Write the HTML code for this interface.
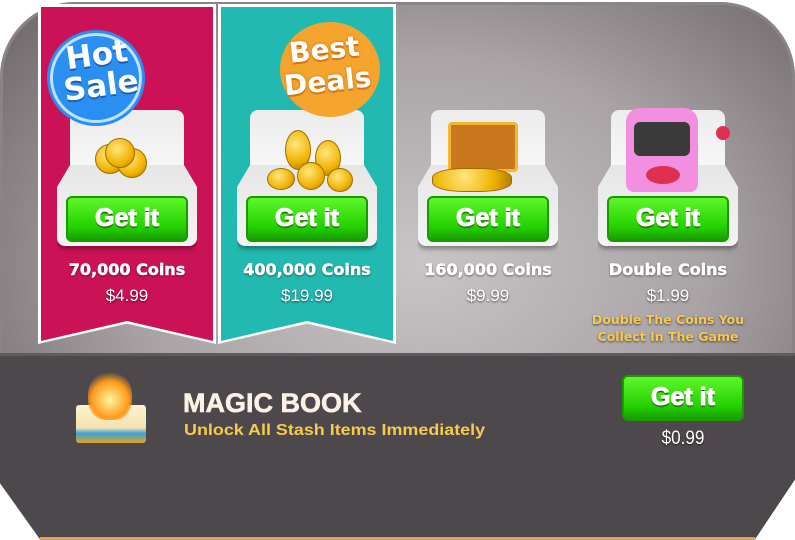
<!DOCTYPE html>
<html><head><meta charset="utf-8"><style>
*{margin:0;padding:0;box-sizing:border-box}
body{width:795px;height:540px;background:#fff;position:relative;overflow:hidden;font-family:"Liberation Sans",sans-serif}
.panel{position:absolute;left:0;top:2px;width:795px;height:400px;border-radius:75px 75px 0 0;background:radial-gradient(ellipse 520px 380px at 420px 260px,#c9c5c7 0%,#a9a3a6 55%,#716b6e 100%);box-shadow:inset 0 0 0 3px #8a8487}
.dark{position:absolute;left:0;top:353px;width:795px;height:186px;background:#4c484b;clip-path:polygon(0 0,100% 0,100% 68%,95% 100%,5% 100%,0 70%);border-top:3px solid #5f5a5d}
.orange{position:absolute;left:40px;top:537px;width:715px;height:3px;background:#e2a05a}
.rib{position:absolute;top:4px;width:178px;height:340px;clip-path:polygon(0 0,100% 0,100% 100%,50% 94%,0 100%)}
.rib .in{position:absolute;left:3px;top:3px;right:3px;bottom:3px;clip-path:polygon(0 0,100% 0,100% 100%,50% 94%,0 100%)}
.card{position:absolute;top:110px;width:140px;height:136px}
.card .top{position:absolute;left:13px;right:13px;top:0;height:60px;border-radius:8px 8px 0 0;background:linear-gradient(#ececec,#f8f8f8)}
.card .bot{position:absolute;left:0;right:0;top:55px;bottom:0;border-radius:8px;background:linear-gradient(#e6e6e6,#f4f4f4);box-shadow:0 3px 4px rgba(0,0,0,.35);clip-path:polygon(13px 0,127px 0,140px 22px,140px 150px,0 150px,0 22px)}
.btn{position:absolute;left:9px;top:86px;width:122px;height:46px;border-radius:6px;background:linear-gradient(#5ef72a,#23d000 70%,#169d00);border:2px solid #1a9a00;color:#fff;font-family:"Liberation Sans",sans-serif;font-weight:bold;font-size:25px;-webkit-text-stroke:1px #fff;text-align:center;line-height:40px;text-shadow:0 2px 1px #1b6b00}
.t{position:absolute;width:180px;text-align:center;color:#fff;font-weight:bold;text-shadow:0 1px 2px rgba(0,0,0,.6)}
.name{font-family:"DejaVu Sans",sans-serif;font-size:16px;-webkit-text-stroke:.5px #fff}
.price{font-size:17px;font-weight:normal}
.coin{position:absolute;border-radius:50%;background:radial-gradient(circle at 40% 35%,#ffe680,#f0b400 60%,#b07800);border:1px solid #a06d00}
</style></head><body>
<div class="panel"></div>
<div class="dark"></div>
<div class="orange"></div>

<div class="rib" style="left:38px;background:#fff"><div class="in" style="background:#cc1257"></div></div>
<div class="rib" style="left:218px;background:#fff"><div class="in" style="background:#22bab0"></div></div>

<div class="card" style="left:57px"><div class="top"></div><div class="bot"></div><div class="coin" style="left:38px;top:34px;width:30px;height:30px"></div><div class="coin" style="left:60px;top:38px;width:30px;height:30px"></div><div class="coin" style="left:48px;top:28px;width:30px;height:30px"></div><div class="btn">Get it</div></div>
<div class="card" style="left:237px"><div class="top"></div><div class="bot"></div><div class="coin" style="left:48px;top:20px;width:26px;height:40px"></div><div class="coin" style="left:78px;top:30px;width:26px;height:36px"></div><div class="coin" style="left:30px;top:58px;width:28px;height:22px"></div><div class="coin" style="left:60px;top:52px;width:28px;height:28px"></div><div class="coin" style="left:90px;top:58px;width:26px;height:24px"></div><div class="btn">Get it</div></div>
<div class="card" style="left:418px"><div class="top"></div><div class="bot"></div><div style="position:absolute;left:30px;top:12px;width:70px;height:50px;background:#c9781e;border:3px solid #f3b730;border-radius:4px"></div><div class="coin" style="left:14px;top:58px;width:80px;height:24px;border-radius:40%"></div><div class="btn">Get it</div></div>
<div class="card" style="left:598px"><div class="top"></div><div class="bot"></div><div style="position:absolute;left:28px;top:-2px;width:72px;height:84px;background:#f28fe0;border-radius:14px 14px 8px 8px"></div><div style="position:absolute;left:36px;top:12px;width:56px;height:34px;background:#3a3a3a;border-radius:6px"></div><div style="position:absolute;left:48px;top:56px;width:34px;height:18px;background:#e0304f;border-radius:50%"></div><div style="position:absolute;left:118px;top:16px;width:14px;height:14px;background:#e0304f;border-radius:50%"></div><div class="btn">Get it</div></div>

<div style="position:absolute;left:50px;top:33px;width:92px;height:90px;border-radius:50%;background:#2a8ff0;border:3px solid #bfe0ff;box-shadow:0 0 0 3px #2a8ff0"></div>
<div style="position:absolute;left:54px;top:40px;color:#fff;font:bold 31px/31px 'DejaVu Sans',sans-serif;text-shadow:0 2px 0 #1a5fb0;transform:rotate(-8deg);text-align:center;width:90px">Hot<br>Sale</div>
<div style="position:absolute;left:280px;top:22px;width:100px;height:95px;border-radius:50%;background:#f5a52e"></div>
<div style="position:absolute;left:266px;top:34px;color:#fff;font:bold 28px/32px 'DejaVu Sans',sans-serif;text-shadow:0 0 3px #d67610,0 2px 0 #d67610;transform:rotate(-6deg);text-align:center;width:120px">Best<br>Deals</div>

<div class="t name" style="left:37px;top:260px">70,000 Coins</div>
<div class="t price" style="left:37px;top:286px">$4.99</div>
<div class="t name" style="left:217px;top:260px">400,000 Coins</div>
<div class="t price" style="left:217px;top:286px">$19.99</div>
<div class="t name" style="left:398px;top:260px">160,000 Coins</div>
<div class="t price" style="left:398px;top:286px">$9.99</div>
<div class="t name" style="left:578px;top:260px">Double Coins</div>
<div class="t price" style="left:578px;top:286px">$1.99</div>
<div class="t" style="left:558px;top:311px;width:220px;font-family:'DejaVu Sans',sans-serif;font-size:12.5px;line-height:17px;color:#f7c94e">Double The Coins You<br>Collect In The Game</div>

<div style="position:absolute;left:76px;top:405px;width:70px;height:38px;background:linear-gradient(#fff3d0,#f3e2b0 60%,#3aa0d8 75%,#e3a520);border-radius:3px"></div>
<div style="position:absolute;left:88px;top:370px;width:44px;height:50px;border-radius:50% 50% 40% 40%;background:radial-gradient(circle at 50% 60%,#fff6a0,#ff9a1a 50%,rgba(255,80,0,0) 75%)"></div>
<div style="position:absolute;left:183px;top:388px;color:#fcf1e6;font-weight:bold;font-size:27px;-webkit-text-stroke:.6px #fcf1e6;white-space:nowrap">MAGIC BOOK</div>
<div style="position:absolute;left:184px;top:422px;color:#f7c94e;font-weight:bold;font-size:16px;transform:scaleX(1.12);transform-origin:left;white-space:nowrap">Unlock All Stash Items Immediately</div>
<div class="btn" style="left:622px;top:375px;height:46px">Get it</div>
<div class="t price" style="left:593px;top:428px;font-size:19px;transform:scaleX(.9)">$0.99</div>
</body></html>
